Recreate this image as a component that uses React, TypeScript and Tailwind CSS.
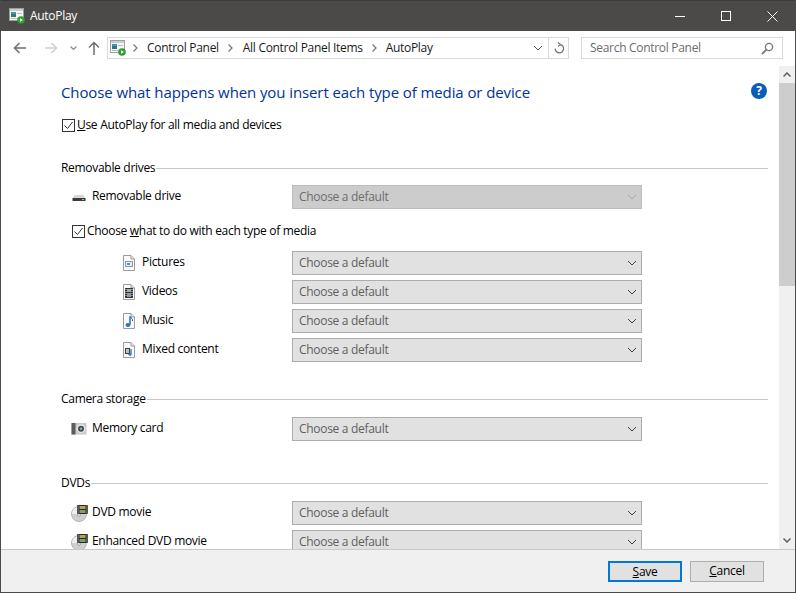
import React from 'react';

const AppIcon = () => (
  <svg width="16" height="16" viewBox="0 0 16 16" className="shrink-0">
    <rect x="0.5" y="0.5" width="14" height="12" fill="#f4f6f6" stroke="#9aa0a0" />
    <rect x="1" y="1" width="13" height="2" fill="#c9cfd0" />
    <rect x="2" y="4" width="5" height="5" fill="#2e7d6b" />
    <rect x="2" y="4" width="5" height="2" fill="#4a90c8" />
    <rect x="8" y="5" width="5" height="1" fill="#b8bec0" />
    <rect x="2" y="10" width="7" height="1" fill="#b8bec0" />
    <circle cx="12" cy="12" r="3.8" fill="#2f9e2f" />
    <path d="M11 10.2 L14 12 L11 13.8 Z" fill="#fff" />
  </svg>
);

const Chevron = ({ color = '#444' }: { color?: string }) => (
  <svg width="10" height="6" viewBox="0 0 10 6" className="shrink-0">
    <path d="M1 1 L5 5 L9 1" fill="none" stroke={color} strokeWidth="1" />
  </svg>
);

const Sep = () => (
  <svg width="5" height="8" viewBox="0 0 5 8" className="block">
    <path d="M0.5 0.5 L4 4 L0.5 7.5" fill="none" stroke="#777" strokeWidth="1.2" />
  </svg>
);

const Select = ({ disabled }: { disabled?: boolean }) => (
  <div
    className={`ml-auto flex h-6 w-[350px] items-center justify-between border pl-[6px] pr-[4px] text-[12px] ${
      disabled ? 'border-[#bcbcbc] bg-[#cccccc] text-[#6d6d6d]' : 'border-[#adadad] bg-[#e1e1e1] text-[#5f5f5f]'
    }`}
  >
    <span>Choose a default</span>
    <Chevron color={disabled ? '#a8a8a8' : '#404040'} />
  </div>
);

const Check = () => (
  <span className="ml-[1px] flex h-[13px] w-[13px] shrink-0 items-center justify-center border border-[#333] bg-white">
    <svg width="11" height="11" viewBox="0 0 11 11">
      <path d="M1.5 5.5 L4.5 8.5 L9.5 2" fill="none" stroke="#333" strokeWidth="1" />
    </svg>
  </span>
);

const SectionTitle = ({ children, className }: { children: React.ReactNode; className?: string }) => (
  <div className={`flex h-[18px] items-center ${className ?? ''}`}>
    <span className="text-[12px] text-black">{children}</span>
    <div className="ml-[1px] h-px flex-1 bg-[#c8c8c8]" />
  </div>
);

const DriveIcon = () => (
  <svg width="16" height="16" viewBox="0 0 16 16">
    <path d="M2 9 L3.5 6 H12.5 L14 9 Z" fill="#d8d8d8" />
    <rect x="1.5" y="9" width="13" height="3" fill="#3c3c3c" />
    <rect x="11" y="10" width="2" height="1" fill="#6fe06f" />
  </svg>
);

const Doc = ({ children }: { children?: React.ReactNode }) => (
  <svg width="16" height="16" viewBox="0 0 16 16">
    <path d="M2.5 0.5 H10 L13.5 4 V15.5 H2.5 Z" fill="#fafafa" stroke="#9b9b9b" />
    <path d="M10 0.5 V4 H13.5" fill="#e4e4e4" stroke="#9b9b9b" />
    {children}
  </svg>
);

const PictureIcon = () => (
  <Doc>
    <rect x="4.5" y="6.5" width="7" height="5" fill="#e6eef5" stroke="#8d9aa6" />
    <rect x="6" y="8" width="3" height="2" fill="#5a8fc2" />
  </Doc>
);

const VideoIcon = () => (
  <Doc>
    <rect x="4" y="4" width="8" height="10" fill="#333" />
    <rect x="6" y="5" width="4" height="3" fill="#9ab0a0" />
    <rect x="6" y="9" width="4" height="4" fill="#8a9aa8" />
    <path d="M5 5 V13 M11 5 V13" stroke="#ddd" strokeDasharray="1 1" />
  </Doc>
);

const MusicIcon = () => (
  <Doc>
    <path d="M9 3.5 V11.5" stroke="#1f62ad" strokeWidth="1.4" />
    <path d="M9 3.5 C10 5.5 12 5.5 11.5 8" fill="none" stroke="#1f62ad" />
    <ellipse cx="7" cy="12" rx="2.5" ry="2" fill="#2a75c4" />
  </Doc>
);

const MixedIcon = () => (
  <Doc>
    <rect x="4" y="6" width="5" height="6" fill="#3d3d3d" />
    <rect x="5" y="7" width="3" height="4" fill="#b7c4cf" />
    <path d="M10 7 V12" stroke="#1f62ad" strokeWidth="1.2" />
    <ellipse cx="9" cy="12.5" rx="1.6" ry="1.2" fill="#2a75c4" />
  </Doc>
);

const CameraIcon = () => (
  <svg width="16" height="16" viewBox="0 0 16 16">
    <rect x="0.5" y="2" width="15" height="11.5" fill="#c9c9c9" />
    <rect x="0.5" y="2" width="4" height="11.5" fill="#5c5c5c" />
    <circle cx="10" cy="7.7" r="4.4" fill="#e9e9e9" />
    <circle cx="10" cy="7.7" r="3" fill="#3f4a4d" />
    <circle cx="10" cy="7.7" r="1.2" fill="#8fb0b5" />
  </svg>
);

const DvdIcon = () => (
  <svg width="18" height="18" viewBox="0 0 18 18">
    <circle cx="8" cy="10" r="7.5" fill="#cfcfcf" stroke="#b4b4b4" />
    <path d="M1 10 A7 7 0 0 1 6 3.3 V10 Z" fill="#eeeeee" />
    <circle cx="8" cy="11" r="1.4" fill="#fff" stroke="#a0a0a0" />
    <rect x="6" y="1" width="11" height="9" fill="#2b2b2b" />
    <rect x="8.5" y="2" width="6" height="3" fill="#b6a34a" />
    <rect x="8.5" y="6" width="6" height="3" fill="#7f9f6a" />
    <path d="M7 1.5 V10 M16 1.5 V10" stroke="#ddd" strokeDasharray="1 1" />
  </svg>
);

const Row = ({ icon, label, disabled, left, className }: { icon: React.ReactNode; label: string; disabled?: boolean; left: string; className?: string }) => (
  <div className={`flex h-6 items-center pr-[126px] ${left} ${className ?? ''}`}>
    <span className="flex w-[21px] shrink-0 items-center">{icon}</span>
    <span className="-mt-[3px] text-[12px] text-black">{label}</span>
    <Select disabled={disabled} />
  </div>
);

export default function App() {
  return (
    <div className="h-[596px] w-[796px] bg-white">
      <div className="flex h-[593px] w-[796px] flex-col overflow-hidden border-x border-b border-[#4b4a48] bg-white font-['Open_Sans','Noto_Sans',sans-serif] tracking-[-0.3px]">
        {/* title bar */}
        <div className="flex h-[31px] shrink-0 items-center border-t border-[#3c3b39] bg-[#4c4a48] pl-[8px]">
          <AppIcon />
          <span className="ml-[5px] text-[12px] text-white">AutoPlay</span>
          <div className="ml-auto flex h-full items-center text-white">
            <div className="flex w-[46px] justify-center">
              <svg width="10" height="10" viewBox="0 0 10 10"><path d="M0 5.5 H10" stroke="#fff" /></svg>
            </div>
            <div className="flex w-[46px] justify-center">
              <svg width="10" height="10" viewBox="0 0 10 10"><rect x="0.5" y="0.5" width="9" height="9" fill="none" stroke="#fff" /></svg>
            </div>
            <div className="flex w-[46px] justify-center">
              <svg width="11" height="11" viewBox="0 0 11 11"><path d="M0.5 0.5 L10.5 10.5 M10.5 0.5 L0.5 10.5" stroke="#fff" /></svg>
            </div>
          </div>
        </div>

        {/* nav bar */}
        <div className="flex h-[35px] shrink-0 items-center bg-white pb-[1px] pl-[12px] pr-[12px]">
          <svg width="14" height="12" viewBox="0 0 14 12"><path d="M13 6 H2 M6.5 1 L1.5 6 L6.5 11" fill="none" stroke="#6e6e6e" strokeWidth="1.5" /></svg>
          <svg width="14" height="12" viewBox="0 0 14 12" className="ml-[17px]"><path d="M1 6 H12 M7.5 1 L12.5 6 L7.5 11" fill="none" stroke="#d0d0d0" strokeWidth="1.5" /></svg>
          <svg width="7" height="5" viewBox="0 0 7 5" className="ml-[12px]"><path d="M0.5 0.5 L3.5 3.5 L6.5 0.5" fill="none" stroke="#8a8a8a" strokeWidth="1.2" /></svg>
          <svg width="12" height="14" viewBox="0 0 12 14" className="ml-[11px]"><path d="M6 14 V2 M1 6.5 L6 1.5 L11 6.5" fill="none" stroke="#6e6e6e" strokeWidth="1.5" /></svg>
          <div className="ml-[7px] flex h-[22px] w-[462px] items-center border border-[#d9d9d9] text-[12px] text-[#1a1a1a]">
            <span className="ml-[2px]"><AppIcon /></span>
            <span className="ml-[7px] mr-[9px]"><Sep /></span>
            <span>Control Panel</span>
            <span className="ml-[9px] mr-[10px]"><Sep /></span>
            <span>All Control Panel Items</span>
            <span className="mx-[9px]"><Sep /></span>
            <span>AutoPlay</span>
            <span className="ml-auto mr-[5px]"><Chevron color="#555" /></span>
            <div className="flex h-full w-[20px] items-center justify-center border-l border-[#d9d9d9]">
              <svg width="12" height="13" viewBox="0 0 12 13"><path d="M6.5 2.5 A4.2 4.2 0 1 1 2.2 6.5 M5 0.5 L7.5 2.5 L5 4.5" fill="none" stroke="#777" strokeWidth="1.3" /></svg>
            </div>
          </div>
          <div className="ml-[12px] flex h-[22px] w-[202px] items-center justify-between border border-[#d9d9d9] pl-[8px] pr-[8px] text-[12px] text-[#6d6d6d]">
            <span>Search Control Panel</span>
            <svg width="13" height="13" viewBox="0 0 13 13"><circle cx="8" cy="5" r="3.6" fill="none" stroke="#777" strokeWidth="1.3" /><path d="M5.3 7.7 L1 12" stroke="#777" strokeWidth="1.8" /></svg>
          </div>
        </div>

        {/* content */}
        <div className="flex min-h-0 flex-1">
          <div className="min-w-0 flex-1 overflow-hidden pl-[60px] pr-[11px]">
            <div className="flex items-center justify-between pt-[14px]">
              <h1 className="text-[15px] font-normal leading-[24px] tracking-[-0.1px] text-[#003399]">Choose what happens when you insert each type of media or device</h1>
              <span className="mb-[3px] mr-[1px] flex h-4 w-4 items-center justify-center rounded-full bg-[#0a5cb8] text-[12px] font-bold leading-none text-white">?</span>
            </div>
            <label className="mt-[12px] flex h-[18px] items-center gap-[2px] text-[12px] text-black">
              <Check />
              <span><u>U</u>se AutoPlay for all media and devices</span>
            </label>

            <SectionTitle className="mt-[25px]">Removable drives</SectionTitle>
            <Row icon={<DriveIcon />} label="Removable drive" disabled left="pl-[10px]" className="mt-[8px]" />
            <label className="ml-[10px] mt-[13px] flex h-[18px] items-center gap-[2px] text-[12px] text-black">
              <Check />
              <span>Choose <u>w</u>hat to do with each type of media</span>
            </label>
            <div className="mt-[11px] flex flex-col gap-[5px]">
              <Row icon={<PictureIcon />} label="Pictures" left="pl-[60px]" />
              <Row icon={<VideoIcon />} label="Videos" left="pl-[60px]" />
              <Row icon={<MusicIcon />} label="Music" left="pl-[60px]" />
              <Row icon={<MixedIcon />} label="Mixed content" left="pl-[60px]" />
            </div>

            <SectionTitle className="mt-[28px]">Camera storage</SectionTitle>
            <Row icon={<CameraIcon />} label="Memory card" left="pl-[10px]" className="mt-[9px]" />

            <SectionTitle className="mt-[33px]">DVDs</SectionTitle>
            <div className="mt-[9px] flex flex-col gap-[5px]">
              <Row icon={<DvdIcon />} label="DVD movie" left="pl-[10px]" />
              <Row icon={<DvdIcon />} label="Enhanced DVD movie" left="pl-[10px]" />
            </div>
          </div>

          {/* scrollbar */}
          <div className="flex w-[16px] shrink-0 flex-col bg-[#f0f0f0]">
            <div className="flex h-[17px] items-center justify-center">
              <svg width="8" height="5" viewBox="0 0 8 5"><path d="M0.5 4.5 L4 1 L7.5 4.5" fill="none" stroke="#606060" strokeWidth="1.5" /></svg>
            </div>
            <div className="h-[203px] bg-[#cdcdcd]" />
            <div className="flex-1" />
            <div className="flex h-[17px] items-center justify-center">
              <svg width="8" height="5" viewBox="0 0 8 5"><path d="M0.5 0.5 L4 4 L7.5 0.5" fill="none" stroke="#606060" strokeWidth="1.5" /></svg>
            </div>
          </div>
        </div>

        {/* footer */}
        <div className="flex h-[43px] shrink-0 items-center justify-end gap-[8px] border-t border-[#c8c8c8] bg-[#f0f0f0] pr-[31px]">
          <button className="h-[21px] w-[74px] border-2 border-[#0078d7] bg-[#e1e1e1] text-[12px] text-black"><u>S</u>ave</button>
          <button className="h-[21px] w-[74px] border border-[#adadad] bg-[#e1e1e1] text-[12px] text-black"><u>C</u>ancel</button>
        </div>
      </div>
    </div>
  );
}
